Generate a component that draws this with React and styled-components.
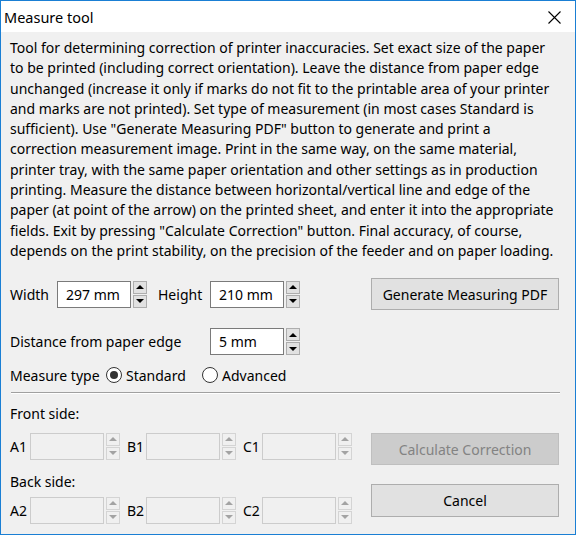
import React from 'react';
import styled, { createGlobalStyle } from 'styled-components';

const GlobalStyle = createGlobalStyle`
  html, body {
    margin: 0;
    padding: 0;
    background: #f0f0f0;
  }
  * {
    box-sizing: border-box;
  }
`;

const Window = styled.div`
  width: 576px;
  height: 535px;
  border: 1px solid #1a7fd4;
  background: #f0f0f0;
  font-family: "Noto Sans", "Segoe UI", sans-serif;
  font-size: 14px;
  color: #000;
  display: flex;
  flex-direction: column;
  overflow: hidden;
`;

const TitleBar = styled.div`
  height: 31px;
  flex: none;
  background: #fff;
  display: flex;
  align-items: center;
  justify-content: space-between;
  padding: 0 14px 0 3px;
  font-size: 14.5px;
`;

const CloseIcon = styled.svg`
  width: 13px;
  height: 13px;
  margin-top: 1px;
`;

const Body = styled.div`
  flex: 1;
  padding: 6px 16px 0 9px;
  display: flex;
  flex-direction: column;
`;

const Description = styled.div`
  line-height: 20.3px;
  white-space: nowrap;
`;

const Line = styled.div``;

const Row = styled.div`
  display: flex;
  align-items: center;
  height: ${({ h }) => h}px;
  margin-top: ${({ mt }) => mt || 0}px;
`;

const Label = styled.span`
  width: ${({ w }) => (w ? `${w}px` : 'auto')};
  flex: none;
  white-space: nowrap;
  margin-left: ${({ ml }) => ml || 0}px;
`;

const Input = styled.div`
  width: 74px;
  height: 27px;
  border: 1px solid ${({ disabled }) => (disabled ? '#cccccc' : '#7a7a7a')};
  background: ${({ disabled }) => (disabled ? '#f0f0f0' : '#fff')};
  display: flex;
  align-items: center;
  padding-left: 8px;
  flex: none;
`;

const Spinner = styled.div`
  width: 14px;
  height: 27px;
  margin-left: 2px;
  display: flex;
  flex-direction: column;
  gap: 1px;
  flex: none;
`;

const SpinButton = styled.div`
  flex: 1;
  border: 1px solid ${({ disabled }) => (disabled ? '#d4d4d4' : '#adadad')};
  background: ${({ disabled }) => (disabled ? '#f0f0f0' : '#e1e1e1')};
  display: flex;
  align-items: center;
  justify-content: center;
`;

const Arrow = styled.div`
  width: 0;
  height: 0;
  border-left: 4px solid transparent;
  border-right: 4px solid transparent;
  ${({ up, disabled }) =>
    up
      ? `border-bottom: 4px solid ${disabled ? '#a3a3a3' : '#000'};`
      : `border-top: 4px solid ${disabled ? '#a3a3a3' : '#000'};`}
`;

const Button = styled.div`
  width: 188px;
  height: ${({ h }) => h || 32}px;
  border: 1px solid ${({ disabled }) => (disabled ? '#bfbfbf' : '#adadad')};
  background: ${({ disabled }) => (disabled ? '#cccccc' : '#e1e1e1')};
  color: ${({ disabled }) => (disabled ? '#838383' : '#000')};
  display: flex;
  align-items: center;
  justify-content: center;
  flex: none;
  margin-left: auto;
`;

const Radio = styled.span`
  width: 16px;
  height: 16px;
  border-radius: 50%;
  border: 1px solid #333;
  background: #fff;
  display: inline-flex;
  align-items: center;
  justify-content: center;
  flex: none;
  margin-right: 4px;

  &::after {
    content: '';
    width: 8px;
    height: 8px;
    border-radius: 50%;
    background: ${({ checked }) => (checked ? '#333' : 'transparent')};
  }
`;

const Separator = styled.div`
  height: 2px;
  margin: 7px -1px 0 1px;
  border-top: 1px solid #a0a0a0;
  border-bottom: 1px solid #fff;
`;

const Bottom = styled.div`
  display: flex;
`;

const LeftCol = styled.div`
  display: flex;
  flex-direction: column;
`;

const RightCol = styled.div`
  margin-left: auto;
  display: flex;
  flex-direction: column;
  padding-top: 39px;
  gap: 19px;
`;

const SectionLabel = styled.div`
  height: 20px;
  line-height: 20px;
  margin-top: ${({ mt }) => mt}px;
`;

const SpinField = ({ value, disabled }) => (
  <>
    <Input disabled={disabled}>{value}</Input>
    <Spinner>
      <SpinButton disabled={disabled}>
        <Arrow up disabled={disabled} />
      </SpinButton>
      <SpinButton disabled={disabled}>
        <Arrow disabled={disabled} />
      </SpinButton>
    </Spinner>
  </>
);

const CorrectionRow = ({ n, mt }) => (
  <Row h={26} mt={mt}>
    <Label w={20}>A{n}</Label>
    <SpinField disabled />
    <Label w={19} ml={7}>B{n}</Label>
    <SpinField disabled />
    <Label w={19} ml={7}>C{n}</Label>
    <SpinField disabled />
  </Row>
);

const lines = [
  'Tool for determining correction of printer inaccuracies. Set exact size of the paper',
  'to be printed (including correct orientation). Leave the distance from paper edge',
  'unchanged (increase it only if marks do not fit to the printable area of your printer',
  'and marks are not printed). Set type of measurement (in most cases Standard is',
  'sufficient). Use "Generate Measuring PDF" button to generate and print a',
  'correction measurement image. Print in the same way, on the same material,',
  'printer tray, with the same paper orientation and other settings as in production',
  'printing. Measure the distance between horizontal/vertical line and edge of the',
  'paper (at point of the arrow) on the printed sheet, and enter it into the appropriate',
  'fields. Exit by pressing "Calculate Correction" button. Final accuracy, of course,',
  'depends on the print stability, on the precision of the feeder and on paper loading.',
];

const App = () => (
  <Window>
    <GlobalStyle />
    <TitleBar>
      <span>Measure tool</span>
      <CloseIcon viewBox="0 0 13 13">
        <path d="M0.5 0.5 L12.5 12.5 M12.5 0.5 L0.5 12.5" stroke="#000" strokeWidth="1.1" />
      </CloseIcon>
    </TitleBar>
    <Body>
      <Description>
        {lines.map((l, i) => (
          <Line key={i}>{l}</Line>
        ))}
      </Description>

      <Row h={32} mt={17}>
        <Label w={47}>Width</Label>
        <SpinField value="297 mm" />
        <Label w={52} ml={11}>Height</Label>
        <SpinField value="210 mm" />
        <Button>Generate Measuring PDF</Button>
      </Row>

      <Row h={27} mt={18}>
        <Label w={200}>Distance from paper edge</Label>
        <SpinField value="5 mm" />
      </Row>

      <Row h={20} mt={10}>
        <Label w={96}>Measure type</Label>
        <Radio checked />
        <Label w={76}>Standard</Label>
        <Radio />
        <Label>Advanced</Label>
      </Row>

      <Separator />

      <Bottom>
        <LeftCol>
          <SectionLabel mt={10}>Front side:</SectionLabel>
          <CorrectionRow n={1} mt={9} />
          <SectionLabel mt={13}>Back side:</SectionLabel>
          <CorrectionRow n={2} mt={5} />
        </LeftCol>
        <RightCol>
          <Button disabled>Calculate Correction</Button>
          <Button h={33}>Cancel</Button>
        </RightCol>
      </Bottom>
    </Body>
  </Window>
);

export default App;
